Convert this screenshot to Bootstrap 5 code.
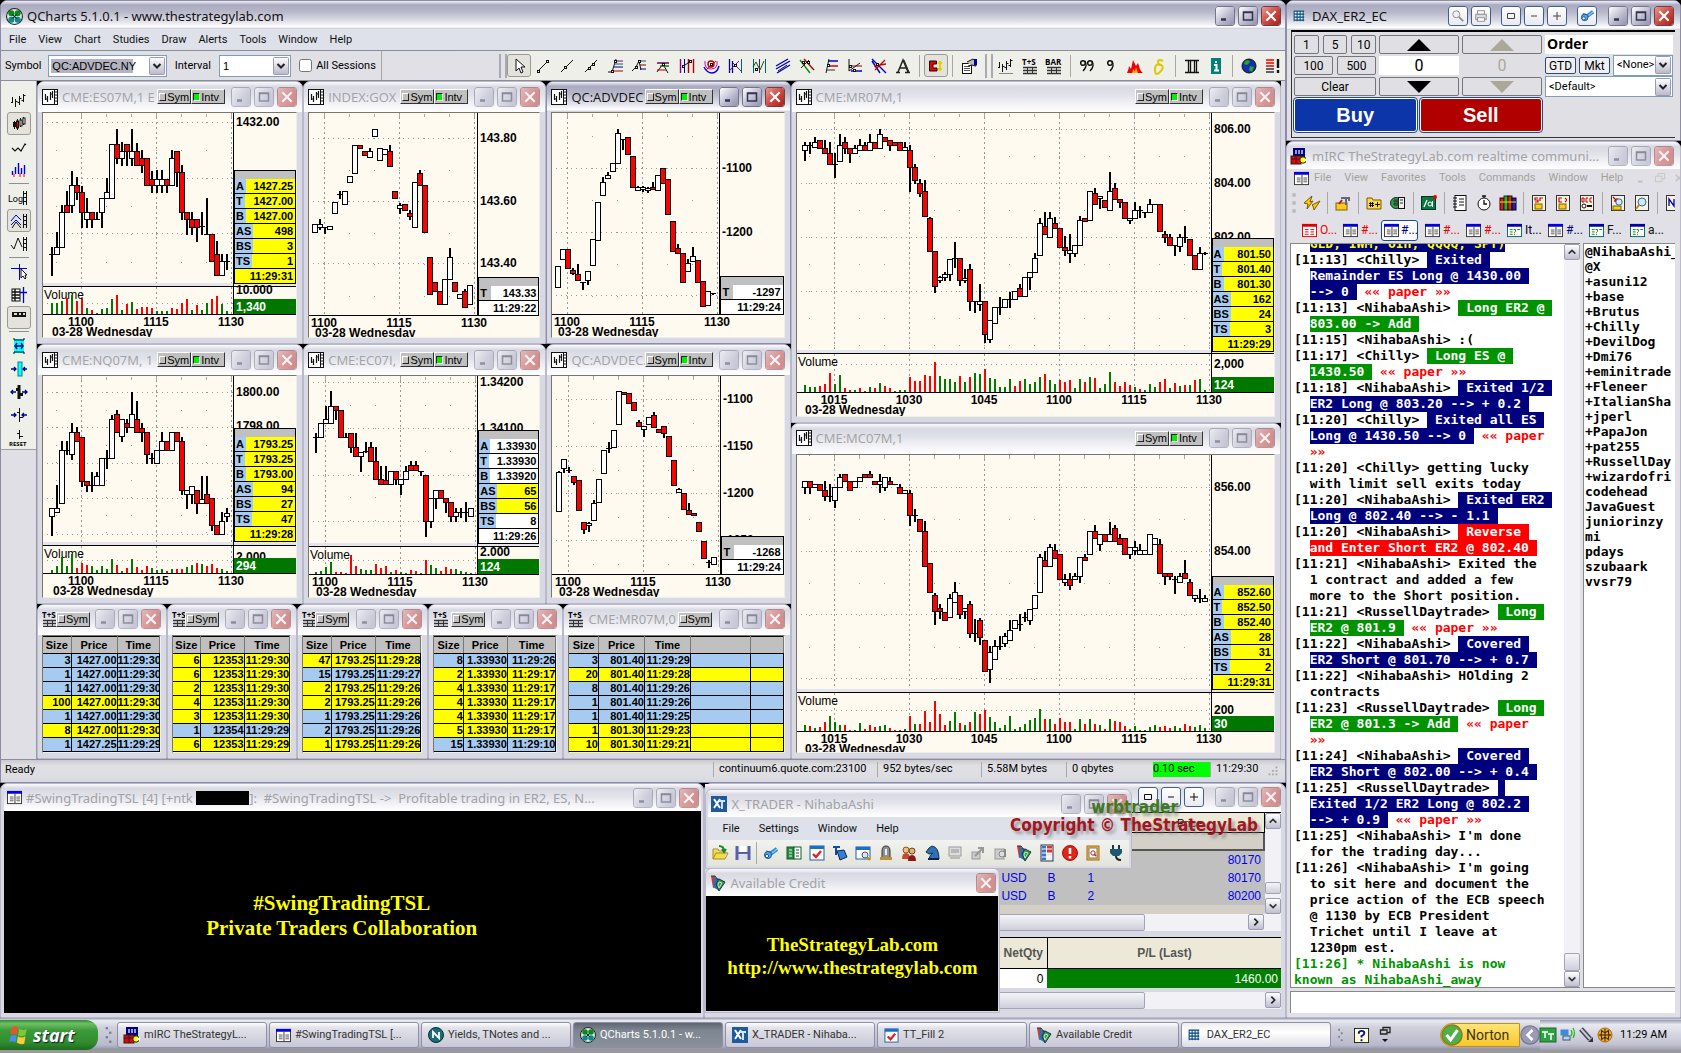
<!DOCTYPE html>
<html lang="en">
<head>
<meta charset="utf-8">
<meta name="viewport" content="width=device-width, initial-scale=1">
<title>Trading desktop</title>
<link href="https://cdn.jsdelivr.net/npm/bootstrap@5.3.0/dist/css/bootstrap.min.css" rel="stylesheet">
<style>
:root{--ui:Roboto,"Open Sans",sans-serif;--frame:#d9d9e4;--edge:#8c8ca8;--cream:#fffaf0}
html,body{height:100%}
body{margin:0;background:#000;font:11px/14px var(--ui);color:#000;overflow:hidden}
button,input,select{font:inherit;color:inherit}
.desk{height:100vh;min-height:900px;min-width:1200px;background:#9a9a9a;padding-bottom:3px}
.leftcol{flex:1 1 0;min-width:0;background:#000}
.rightcol{flex:0 0 395px;min-width:0;background:#000}
.xw{background:var(--frame);border:1px solid var(--edge);border-radius:7px 7px 0 0;overflow:hidden;min-width:0;min-height:0;position:relative}
.xw.dim{border-color:#b9b9cc}
.tb{display:flex;align-items:center;background:linear-gradient(#f0f0f6 0,#a9a9c0 14%,#b9b9cb 40%,#e4e4ec 75%,#fff 92%,#c8c8d6 100%);white-space:nowrap;overflow:hidden;flex:none}
.dim>.tb{background:linear-gradient(#fbfbfd 0,#d9d9e3 16%,#e2e2ea 45%,#f6f6f9 80%,#fff 100%)}
.tt{font-family:"Noto Sans","Open Sans",sans-serif;font-size:13px;line-height:18px;color:#111;overflow:hidden;flex:1 1 0;min-width:0}
.dim>.tb .tt{color:#a2a2a4}
.wb{width:20px;height:20px;flex:none;border:1px solid #fff;outline:1px solid #74748f;outline-offset:-1px;border-radius:3px;background:linear-gradient(135deg,#fff,#b6b6cb 60%,#9292ac);padding:0;display:flex;align-items:center;justify-content:center;margin-left:3px;color:#33334f}
.wb.cl{background:linear-gradient(135deg,#e79a92,#c9453d 55%,#a5231f);color:#fff;outline-color:#7a3b42}
.dim>.tb .wb{opacity:.5}
.wb.lite{background:linear-gradient(#fff,#e9e9ef);outline-color:#3d608c;color:#444}
.dim>.tb .wb.lite{opacity:1;color:#111}
.ic{display:block;flex:none}
.menu a{color:#111;text-decoration:none}
.menu.soft a{color:#a3a39c}
.menu{white-space:nowrap;font-size:11px}
/* QCharts */
.qtool{height:31px;background:linear-gradient(90deg,#dfdfe6 0,#e0e0e6 39%,#efefea 40%,#efefea);border-top:1px solid #8d8d98;border-bottom:1px solid #8d8d98}
.fld{border:1px solid #7f9db9;background-color:#fff;height:22px;font-family:"Liberation Sans",Arial,sans-serif;font-size:11px;border-radius:0;padding:0 20px 0 3px;appearance:none;
background-image:url("data:image/svg+xml,%3Csvg xmlns='http://www.w3.org/2000/svg' width='16' height='18'%3E%3Cdefs%3E%3ClinearGradient id='g' x2='0' y2='1'%3E%3Cstop stop-color='%23fff'/%3E%3Cstop offset='1' stop-color='%23b8b8cc'/%3E%3C/linearGradient%3E%3C/defs%3E%3Crect x='.5' y='.5' width='15' height='17' rx='1' fill='url(%23g)' stroke='%239a9ab0'/%3E%3Cpath d='M4.500 7l3.500 3.500 3.500-3.500' fill='none' stroke='%23222' stroke-width='2'/%3E%3C/svg%3E"),linear-gradient(#b3b3c1,#b3b3c1);background-repeat:no-repeat;background-size:16px 18px,0 0;background-position:right 1px center,2px 3px}
.fld.picked{background-size:16px 18px,82px 14px}
.sep{width:1px;height:22px;background:#a9a9a4;flex:none}
.grip{width:8px;height:24px;border-left:2px solid #a9a9b4;border-right:2px solid #a9a9b4;flex:none}
.tbtn{width:24px;height:23px;border:1px solid transparent;border-radius:3px;background:none;padding:0;display:flex;align-items:center;justify-content:center;flex:none}
.tbtn.on{background:#e3e3dc;border-color:#9b9b93}
.side{width:36px;flex:none;border-right:1px solid #9a9aa6;background:#dfdfe5}
.side .inner{background:#efefea;border-bottom:1px solid #a0a0a8;padding-top:8px}
.side hr{width:20px;margin:2px auto;border:0;border-top:1px solid #8f8f8f;opacity:1}
.mdi{display:grid;grid-template-columns:753fr 490fr;background:#000;min-width:0;min-height:0}
.mleft{display:grid;grid-template-rows:262fr 258fr 155fr;min-width:0;min-height:0}
.mright{display:grid;grid-template-rows:340fr 335fr;min-width:0;min-height:0}
.r3{display:grid;grid-template-columns:266fr 243fr 244fr;min-height:0}
.r5{display:grid;grid-template-columns:130fr 130fr 131fr 135fr 227fr;min-height:0}
.mw{display:flex;flex-direction:column;padding:0 5px 5px 4px}
.mw .tb{height:30px;margin:0 -5px 0 -4px;padding:0 5px 1px 4px}
.mw .tt{font-family:"Open Sans","Noto Sans",sans-serif;margin-left:4px}
.chip{height:15px;width:34px;flex:none;border:1px solid;border-color:#fff #333 #333 #fff;background:#c0c0c0;font:11px/12px "Liberation Sans",Arial,sans-serif;padding:0;display:flex;align-items:center;gap:1px;border-radius:0;overflow:hidden}
.chip i{width:7px;height:8px;border:1px solid;border-color:#fff #222 #222 #fff;margin-left:1px;flex:none}
.chip i.go{background:#00ee00;border-color:#222 #fff #fff #222}
.client{position:relative;flex:1 1 0;min-height:0;background:var(--cream);border:1px solid;border-color:#77776f #eee #eee #77776f;overflow:hidden}
.client svg.plot{position:absolute;inset:0;width:100%;height:100%;font:bold 12px "Liberation Sans",Arial,sans-serif}
.quote{position:absolute;right:0;background:#fff;border:1px solid #000;font:bold 11px/14px "Liberation Sans",Arial,sans-serif}
.quote .cap{height:8px;background:#c0c0c0}
.quote .q{display:flex;border-bottom:1px solid #000;height:15px;background:#fff}
.quote .q:last-child{border-bottom:0;height:14px}
.quote .q.y{background:#ff0}
.quote .k{background:#a6caf0;padding:0 2px 0 1px}
.quote .k.gr{background:#c0c0c0;padding-right:4px}
.quote .v{flex:1;text-align:right;padding-right:2px}
table.ts{border-collapse:collapse;table-layout:fixed;font:bold 11px/12px "Liberation Sans",Arial,sans-serif;width:100%}
.ts td,.ts th{border:1px solid #000;border-left:0;padding:0;height:14px;text-align:right;overflow:hidden;white-space:nowrap}
.ts th{background:#c0c0c0;text-align:center;height:17px;border-color:#000 #808080;border-right:1px solid #777}
.ts tr.b td{background:#a6caf0}.ts tr.y td{background:#ff0}
.status{height:20px;background:linear-gradient(#c9c9cf,#e0e0e4 30%,#dcdce2);border-top:1px solid #8e8e98}
.status span{border-left:1px solid #aaa;padding-left:5px;height:15px;flex:none}
.status .ok{background:#0f0;border:0}
/* black message windows */
.msg{background:#000;color:#ff0;font-family:"Liberation Serif","Times New Roman",serif;font-weight:bold;text-align:center;display:flex;flex-direction:column;justify-content:center}
/* X_TRADER */
.sb{background:#f1f1f6;display:flex;flex:none}
.sb button{width:16px;height:16px;border:1px solid #9c9cb2;border-radius:2px;background:linear-gradient(#fff,#bfbfd0);padding:0;display:flex;align-items:center;justify-content:center;flex:none}
.thumb{background:linear-gradient(#f4f4f8,#cfcfdc);border:1px solid #a4a4b8;border-radius:2px}
.float{position:absolute;z-index:2;display:flex;flex-direction:column}
.ari{font-family:"Liberation Sans",Arial,sans-serif}
.mark2{position:absolute;z-index:4;right:27px;top:14px;font:bold 17px/18px "DejaVu Sans Condensed","DejaVu Sans",sans-serif;text-align:right;color:#a31520;text-shadow:3px 3px 3px #777a}
.mark2 b{display:block;color:#3e7a1e;padding-right:80px}
/* DAX */
.nb{border:1px solid #75757c;border-radius:2px;background:#e0e0e4;padding:0;height:19px;font-size:12px;line-height:16px}
.daxg{display:grid;grid-template-columns:82px 80px 80px 1fr;grid-template-rows:19px 19px 19px 35px;gap:2px 3px;padding:3px 2px 0 2px}
.daxg .fld{height:21px;font-family:var(--ui);font-size:11px;line-height:14px;padding-right:16px;margin-top:-1px}
.big{color:#fff;font:bold 20px/30px "Liberation Sans",Arial,sans-serif;border:1px solid #fff;outline:1px solid #264a78;border-radius:3px;height:34px;padding:0}
/* mIRC */
.chat{font:bold 13px/16px "DejaVu Sans Mono","Liberation Mono",monospace;white-space:pre;background:#fff;overflow:hidden}
.chat span{display:inline-block;height:16px}
.cn{background:#00007f;color:#fff}.cg{background:#009300;color:#fff}.cr{background:#f00;color:#fff}.cy{background:#00007f;color:#ff0}.tr{color:#f00}.tg{color:#009300}
.nicks{font:bold 13px/15px "DejaVu Sans Mono","Liberation Mono",monospace;background:#fff;overflow:hidden}
.irctab{width:41px;flex:none;height:21px;border:1px solid transparent;background:none;padding:0 0 0 2px;display:flex;align-items:center;gap:3px;font-size:12px;border-radius:3px;white-space:nowrap;overflow:hidden}
.irctab.on{background:#fafafd;border-color:#1e4a86;width:37px;margin-right:4px;gap:2px}
/* taskbar */
.task{height:32px;flex:none;background:linear-gradient(#9a9ab0 0,#e9e9f0 8%,#d0d0dc 30%,#b9b9ca 85%,#8d8da4);padding-top:2px}
.start{width:98px;height:30px;flex:none;border:0;border-radius:0 12px 12px 0;background:linear-gradient(#2f8a2f,#6cc063 12%,#3c9a3a 35%,#318c2e 75%,#1d6a1e);color:#fff;font:italic bold 18px/26px "Open Sans",sans-serif;text-shadow:1px 1px 1px #123;display:flex;align-items:center;gap:5px;padding:0 0 0 8px}
.tk{flex:0 1 150px;height:26px;border:1px solid #8e8ea4;border-radius:3px;background:linear-gradient(#fff,#e2e2ea 20%,#c8c8d6);display:flex;align-items:center;gap:4px;padding:0 6px;white-space:nowrap;overflow:hidden;color:#333;margin-right:2px}
.tk.dn{background:linear-gradient(#5d6672,#7d8590 30%,#8a919b);color:#fff}
.tk.lt{background:linear-gradient(#eee,#fff 40%,#dcdce6);color:#333}
.norton{width:80px;height:24px;border:1px solid #b8912a;border-radius:12px 0 0 12px;background:linear-gradient(#ffe476,#f9c62a);font:14px/20px Roboto,sans-serif;color:#3d3418;padding:0;display:flex;align-items:center;gap:3px;flex:none}
.tray{background:linear-gradient(#9a9ab0,#e8e8f0 15%,#c4c4d2 80%,#a0a0b4);height:30px}
</style>
<script src="https://cdn.jsdelivr.net/npm/bootstrap@5.3.0/dist/js/bootstrap.bundle.min.js"></script>
</head>
<body>
<div class="desk d-flex flex-column">
<div class="d-flex flex-grow-1" style="min-height:0">

<div class="leftcol d-flex flex-column">
<!-- QCharts -->
<section class="xw d-flex flex-column" style="flex:783 1 0">
  <div class="tb" style="height:28px;padding:2px 4px 0 5px"><i data-ic="clover" data-s="17"></i><span class="tt ms-1">QCharts 5.1.0.1 - www.thestrategylab.com</span><i data-ctl="mxc"></i></div>
  <nav class="menu d-flex align-items-center ps-2" style="height:21px;gap:12px;background:#dee1ea"><a href="#">File</a><a href="#">View</a><a href="#">Chart</a><a href="#">Studies</a><a href="#">Draw</a><a href="#">Alerts</a><a href="#">Tools</a><a href="#">Window</a><a href="#">Help</a></nav>
  <div class="qtool d-flex align-items-center">
    <label for="sym" class="ms-1 me-1" style="width:40px">Symbol</label>
    <select id="sym" class="fld picked" style="width:120px"><option>QC:ADVDEC.NY</option></select>
    <label for="intv" class="mx-2">Interval</label>
    <select id="intv" class="fld" style="width:73px"><option>1</option></select>
    <input id="alls" type="checkbox" class="ms-2 me-1" style="width:13px;height:13px"><label for="alls" style="width:66px;white-space:nowrap">All Sessions</label>
    <span class="sep" style="height:29px"></span><span style="flex:0 1 119px"></span>
    <span class="grip"></span>
    <div class="d-flex align-items-center flex-grow-1" id="qicons"></div>
  </div>
  <div class="d-flex flex-grow-1" style="min-height:0;padding-right:4px">
    <div class="side"><div class="inner d-flex flex-column align-items-center" id="sideicons"></div></div>
    <div class="mdi flex-grow-1">
      <div class="mleft"><div class="r3" id="row1"></div><div class="r3" id="row2"></div><div class="r5" id="row3"></div></div>
      <div class="mright" id="right"></div>
    </div>
  </div>
  <div class="status d-flex align-items-center ps-1">Ready<div class="flex-grow-1"></div>
    <span style="width:164px">continuum6.quote.com:23100</span><span style="width:104px">952 bytes/sec</span><span style="width:85px">5.58M bytes</span><span style="width:87px">0 qbytes</span><span class="ok ps-0" style="width:57px">0.10 sec</span><span style="width:56px">11:29:30</span><i data-ic="sizer" data-s="14"></i><div style="width:5px"></div></div>
  <div style="height:3px"></div>
</section>

<div class="d-flex" style="flex:235 1 0;min-height:0">
  <section class="xw dim d-flex flex-column" style="flex:704 1 0;padding:0 2px 4px 3px">
    <div class="tb" style="height:27px;padding:0 2px 0 3px"><i data-ic="chan" data-s="15"></i><span class="tt ms-1">#SwingTradingTSL [4] [+ntk <b style="display:inline-block;width:53px;height:14px;background:#000;vertical-align:-2px"></b>]:&nbsp; #SwingTradingTSL -&gt;&nbsp; Profitable trading in ER2, ES, N...</span><i data-ctl="mxc"></i></div>
    <div class="msg flex-grow-1" style="font-size:21px;line-height:25px;padding:8px 22px 0 0"><span>#SwingTradingTSL</span><span>Private Traders Collaboration</span></div>
  </section>

  <section class="xw dim d-flex flex-column" style="flex:581 1 0;padding:0 4px 4px 0;overflow:visible">
    <div class="tb justify-content-end" style="height:28px;padding:0 0 2px 0"><button class="wb lite" aria-label="Restore"><i data-ic="mbox" data-s="12"></i></button><button class="wb lite" aria-label="Minus"><i data-ic="minus" data-s="12"></i></button><button class="wb lite me-2" aria-label="Plus"><i data-ic="plus" data-s="12"></i></button><i data-ctl="mxc"></i></div>
    <div class="d-flex ari" style="height:102px;border-top:1px solid #000;margin-left:130px">
      <div class="flex-grow-1 d-flex flex-column" style="background:#d4d0c8">
        <div style="height:20px;background:#ece9d8;border-bottom:1px solid #000;border-right:1px solid #000;text-align:right;padding:3px 62px 0 0">Price</div>
        <div style="height:18px;border-bottom:2px solid #555;border-right:2px solid #555"></div>
        <div class="d-flex flex-column" style="background:#c0c0c0;color:#00e;font-size:12px;line-height:18px">
          <div class="text-end pe-1">80170</div>
          <div class="d-flex pe-1" style="padding-left:166px"><span style="width:46px">USD</span><span style="width:40px">B</span><span>1</span><span class="ms-auto">80170</span></div>
          <div class="d-flex pe-1" style="padding-left:166px"><span style="width:46px">USD</span><span style="width:40px">B</span><span>2</span><span class="ms-auto">80200</span></div>
        </div>
      </div>
      <div class="sb flex-column"><button aria-label="Up"><i data-ic="up" data-s="10"></i></button><div class="flex-grow-1"></div><div class="thumb" style="height:12px"></div><button aria-label="Down" class="mt-1"><i data-ic="down" data-s="10"></i></button></div>
    </div>
    <div class="sb" style="margin-left:130px;height:17px;padding-right:17px"><div class="thumb" style="width:310px"></div><div class="flex-grow-1"></div><button aria-label="Right"><i data-ic="right" data-s="10"></i></button></div>
    <table class="ari" style="margin:6px 0 0 130px;width:auto;border-top:1px solid #000;font-size:12px;color:#555"><thead><tr style="height:31px;background:#ece9d8"><th style="width:212px;text-align:right;padding-right:4px;border:solid #000;border-width:0 1px 1px 0">NetQty</th><th style="text-align:center;border-bottom:1px solid #000">P/L (Last)</th></tr></thead>
    <tbody><tr style="height:19px"><td style="background:#fff;text-align:right;padding-right:4px;color:#000">0</td><td style="background:#008000;color:#fff;text-align:right;padding-right:3px">1460.00</td></tr></tbody></table>
    <div class="sb mt-1" style="margin-left:130px;height:17px"><div class="thumb" style="width:310px"></div><div class="flex-grow-1"></div><button aria-label="Right"><i data-ic="right" data-s="10"></i></button></div>

    <div class="xw dim float" style="left:0;top:5px;width:427px;height:80px;padding:0 2px 2px 2px">
      <div class="tb" style="height:27px;padding:1px 2px 0 3px"><i data-ic="xt" data-s="16"></i><span class="tt ms-1">X_TRADER - NihabaAshi</span><i data-ctl="mxc"></i></div>
      <nav class="menu d-flex align-items-center" style="height:23px;gap:19px;padding-left:14px;background:#dee1ea"><a href="#">File</a><a href="#">Settings</a><a href="#">Window</a><a href="#">Help</a></nav>
      <div class="d-flex align-items-center flex-grow-1" style="background:linear-gradient(#f2f2ee,#e4e4de)" id="xticons"></div>
    </div>
    <div class="xw dim float" style="left:0;top:84px;width:295px;bottom:4px;padding:0 1px 1px 0">
      <div class="tb" style="height:27px;padding:0 2px 0 4px"><i data-ic="cards" data-s="16"></i><span class="tt ms-1">Available Credit</span><i data-ctl="c"></i></div>
      <div class="msg flex-grow-1" style="font-size:19px;line-height:23px;padding-top:4px"><span>TheStrategyLab.com</span><span>http://www.thestrategylab.com</span></div>
    </div>
    <div class="mark2"><b>wrbtrader</b>Copyright © TheStrategyLab</div>
  </section>
</div>
</div>

<!-- right column -->
<div class="rightcol d-flex flex-column">
<section class="xw d-flex flex-column" style="height:141px;flex:none;padding:0 5px 2px 4px;background:#e0e0e4">
  <div class="tb" style="height:29px;margin:0 -5px 0 -4px;padding:0 6px 0 6px"><i data-ic="grid" data-s="12"></i><span class="tt" style="margin-left:7px">DAX_ER2_EC</span>
  <button class="wb lite" aria-label="Find"><i data-ic="lens" data-s="14"></i></button><button class="wb lite" aria-label="Print"><i data-ic="print" data-s="14"></i></button><button class="wb lite" style="margin-left:10px" aria-label="Normal"><i data-ic="mbox" data-s="12"></i></button><button class="wb lite" aria-label="Less"><i data-ic="minus" data-s="12"></i></button><button class="wb lite" aria-label="More"><i data-ic="plus" data-s="12"></i></button><button class="wb lite me-2" style="margin-left:10px" aria-label="Link"><i data-ic="torch" data-s="15"></i></button><i data-ctl="mxc"></i></div>
  <div class="daxg flex-grow-1" style="border-top:2px solid #000;border-left:1px solid #333;border-bottom:1px solid #333">
    <div class="d-flex gap-1"><button class="nb" style="flex:1">1</button><button class="nb" style="flex:1">5</button><button class="nb" style="flex:1">10</button></div>
    <button class="nb" aria-label="Up"><i data-ic="triu" data-s="24"></i></button><button class="nb" aria-label="Up 2" style="color:#aaa897"><i data-ic="triu" data-s="24"></i></button>
    <div class="bg-white" style="font:bold 14px/18px 'Open Sans',sans-serif;padding-left:2px">Order</div>
    <div class="d-flex gap-1"><button class="nb" style="flex:1">100</button><button class="nb" style="flex:1">500</button></div>
    <div class="bg-white text-center" style="font-size:16px;line-height:19px">0</div><div class="text-center" style="font-size:16px;line-height:19px;color:#aaa897">0</div>
    <div class="d-flex align-items-center" style="gap:3px;height:19px"><button class="nb" style="width:31px;height:17px;line-height:12px;border-color:#2d4a72;background:#f0f0f4">GTD</button><button class="nb" style="width:31px;height:17px;line-height:12px;border-color:#2d4a72;background:#f0f0f4">Mkt</button><select class="fld flex-grow-1" aria-label="Stop" style="min-width:0"><option>&lt;None&gt;</option></select></div>
    <button class="nb">Clear</button>
    <button class="nb" aria-label="Down"><i data-ic="trid" data-s="24"></i></button><button class="nb" aria-label="Down 2" style="color:#aaa897"><i data-ic="trid" data-s="24"></i></button>
    <select class="fld" aria-label="Account"><option>&lt;Default&gt;</option></select>
    <div class="d-flex" style="grid-column:1/4;gap:3px"><button class="big" style="flex:1;background:#0b35a8">Buy</button><button class="big" style="flex:1;background:#b00000">Sell</button></div>
  </div>
</section>
<section class="xw dim d-flex flex-column flex-grow-1" style="padding:0 5px 4px 3px;background:#e0e0e6">
  <div class="tb" style="height:27px;margin:0 -5px 0 -3px;padding:0 6px 0 4px"><i data-ic="mirc" data-s="16"></i><span class="tt" style="margin-left:5px">mIRC TheStrategyLab.com realtime communi...</span><i data-ctl="mxc"></i></div>
  <nav class="menu soft d-flex align-items-center" style="height:19px;padding-left:4px;gap:13px"><i data-ic="chan" data-s="15"></i><a href="#" style="margin-left:-8px">File</a><a href="#">View</a><a href="#">Favorites</a><a href="#">Tools</a><a href="#">Commands</a><a href="#">Window</a><a href="#">Help</a><span class="ms-auto d-flex" style="gap:8px;color:#c4c4c0"><i data-ic="min" data-s="11"></i><i data-ic="rest" data-s="11"></i><i data-ic="cls" data-s="10"></i></span></nav>
  <div class="d-flex align-items-center overflow-hidden" style="height:30px;flex:none" id="ircicons"></div>
  <div class="d-flex align-items-center overflow-hidden" style="height:25px;flex:none;padding-left:9px" id="irctabs"></div>
  <div class="d-flex flex-grow-1" style="min-height:0">
    <div class="flex-grow-1 d-flex" style="min-width:0;border:1px solid #888;border-right:0"><div class="chat flex-grow-1" id="chat" style="padding-left:3px"></div>
      <div class="sb flex-column"><button aria-label="Up"><i data-ic="up" data-s="10"></i></button><div class="flex-grow-1"></div><div class="thumb" style="height:18px;width:16px"></div><button aria-label="Down"><i data-ic="down" data-s="10"></i></button></div></div>
    <div class="nicks" id="nicks" style="flex:0 0 92px;border:1px solid #888;border-right:0;margin-left:3px;padding-left:1px"></div>
  </div>
  <input type="text" aria-label="Message" style="height:22px;border:1px solid #888;border-width:1px 0 0 1px;background:#fff;margin-top:3px">
</section>
</div>
</div>

<!-- taskbar -->
<footer class="task d-flex align-items-center">
  <button class="start"><i data-ic="flag" data-s="20"></i>start</button>
  <span style="width:19px;flex:none" class="d-flex justify-content-center"><i data-ic="dots" data-s="18"></i></span>
  <button class="tk"><i data-ic="mirc" data-s="16"></i>mIRC TheStrategyL...</button>
  <button class="tk"><i data-ic="chan" data-s="15"></i>#SwingTradingTSL [...</button>
  <button class="tk"><i data-ic="nn" data-s="16"></i>Yields, TNotes and ...</button>
  <button class="tk dn"><i data-ic="clover" data-s="16"></i>QCharts 5.1.0.1 - w...</button>
  <button class="tk"><i data-ic="xt" data-s="16"></i>X_TRADER - Nihaba...</button>
  <button class="tk"><i data-ic="check" data-s="15"></i>TT_Fill 2</button>
  <button class="tk"><i data-ic="cards" data-s="16"></i>Available Credit</button>
  <button class="tk lt"><i data-ic="grid" data-s="12"></i>&nbsp;DAX_ER2_EC</button>
  <span class="d-flex align-items-center" style="gap:7px;flex:1 0 90px"><i data-ic="dots" data-s="14"></i><i data-ic="help" data-s="15"></i><i data-ic="rest2" data-s="16"></i></span>
  <button class="norton"><i data-ic="ok" data-s="22"></i>Norton</button>
  <i data-ic="chev" data-s="20"></i>
  <span class="tray d-flex align-items-center" style="gap:3px;flex:none;padding:0 14px 0 0"><i data-ic="ttt" data-s="16"></i><i data-ic="net" data-s="16"></i><i data-ic="rocket" data-s="16"></i><i data-ic="globe2" data-s="16"></i><span class="ms-1">11:29 AM</span></span>
</footer>
</div>

<script>
const P=(d,c='#111',w=1)=>`<path d="${d}" fill="none" stroke="${c}" stroke-width="${w}"/>`;
const F=(d,c)=>`<path d="${d}" fill="${c}"/>`;
const R=(x,y,w,h,c,s)=>`<rect x="${x}" y="${y}" width="${w}" height="${h}" fill="${c}"${s?` stroke="${s}"`:''}/>`;
const C=(x,y,r,c,s)=>`<circle cx="${x}" cy="${y}" r="${r}" fill="${c}"${s?` stroke="${s}"`:''}/>`;
const N=(...p)=>{let s='';for(let i=0;i<p.length;i+=2)s+=R(p[i]-1+.5,p[i+1]-1+.5,2,2,'#fff','#111');return s};
const bars=P('M1.500 4v6M0 9.500h2M4.500 6v8M4.500 8.500h2M8.500 3v9M8.500 5.500h2M6.500 9.500h2M12.500 1v8M10.500 7.500h2M12.500 2.500h2');
const table=P('M1 9.500h14M1 12.500h14M1 15.500h14','#333',1.5)+P('M5.500 9v7M10.500 9v7','#333');
const win=R(.5,1.5,15,13,'#fff','#333')+R(0,1,16,3,'#0000e0');
const lines=P('M3 7.500h4M3 9.500h4M3 11.500h4M10 7.500h4M10 9.500h4M10 11.500h4','#555')+P('M8.500 4v10','#333');
const doc=R(1.5,.5,13,15,'#f7f3e2','#333');
const IC={
clover:C(8,8,7.5,'#dfe7df','#222')+[[5,5],[11,5],[5,11],[11,11]].map((p,i)=>C(p[0],p[1],2.8,i>1?'#0a8a8a':'#0a8a1e')).join('')+P('M6 6l4 4M10 6l-4 4','#033'),
min:P('M2 9.500h5','currentColor',2.5),max:P('M1.500 2h9v8h-9zM1 2.500h10','currentColor',1.5),cls:P('M2 2l8 8M10 2l-8 8','currentColor',1.8),
rest:P('M3.500 3V.5h7v6H8M.5 3.500h7v6h-7z','currentColor'),rest2:P('M7 2.500V.5h7v5h-3M4.500 3h6.500v4h-6.500z','#222',1.3)+F('M6 12h6l-3 3z','#111'),
mbox:P('M2.500 3.500h7v5h-7z','currentColor'),minus:P('M3 6h6','currentColor'),plus:P('M2 6h8M6 2v8','currentColor'),
up:P('M2 8l4-4 4 4','#333',2),down:P('M2 4l4 4 4-4','#333',2),right:P('M4 2l4 4-4 4','#222',2),
triu:F('M0 12L12 0l12 12z','currentColor'),trid:F('M0 0l12 12L24 0z','currentColor'),
chart:R(.5,.5,15,15,'#fff','#111')+P('M3.500 5v6M5.500 7v6M8.500 3v8M10.500 2v7M3.500 10h2M8.500 5h2','#111',1.2)+P('M12.500 1v14M13 3h2M13 6h2M13 9h2M13 12h2'),
tsi:`<text x="0" y="7" font-size="8" font-weight="bold" font-family="Open Sans">T+S</text>`+table,
bar:`<text x="-1" y="7" font-size="8" font-weight="bold" font-family="Open Sans">BAR</text>`+table,
chan:win+lines,chanr:R(.5,1.5,15,13,'#fff','#d00')+R(0,1,16,3,'#d00')+P('M3 7h4M9 7h4M3 9.500h4M9 9.500h4M3 12h4M9 12h4','#d00'),
chang:R(.5,1.5,15,13,'#fff','#066')+R(0,1,16,3,'#00a')+P('M3 7h3M3 9.500h3M3 12h3M11 7h3M7 7q3-1 2 2l-1 1v1M8 12v1','#080'),
sizer:[[11,4],[11,8],[7,8],[11,12],[7,12],[3,12]].map(p=>R(p[0],p[1],2,2,'#a5a5a5')).join(''),
grid:R(1,1,14,14,'#dff')+P('M1.500 1v14M5.500 1v14M9.500 1v14M13.500 1v14M1 1.500h14M1 5.500h14M1 9.500h14M1 13.500h14','#147',1.4),
lens:C(6,6,4,'#eef','#888')+P('M9 9l5 5','#888',2),print:R(4,2,8,4,'#fff','#888')+R(2,6,12,6,'#ddd','#888')+R(4,10,8,4,'#fff','#888'),
torch:P('M7 9l7-5','#2f86d8',4)+P('M9 8l5-4','#8cc8f4',1.5)+C(5,10,3.5,'#58a8e8','#1d5a9a')+C(4,11,1.7,'#e4f4ff','#1d5a9a')+P('M3 6l4 1','#1d5a9a'),
mirc:R(2,0,12,9,'#00007f')+P('M5 2v4M8 2v4M11 2v4','#fff',1.2)+R(0,8,10,8,'#e00','#222')+P('M5 8v8M0 11h10','#222')+C(12,12,3.2,'#ff0','#222')+F('M12 12l4-2v4z','#fff'),
xt:R(0,0,16,16,'#1d5a9a')+P('M3 3l6 9M9 3l-6 9','#fff',2)+P('M8 5h6M11 5v8','#cfe4ff',2),
cards:F('M1 1l4 0 2 10-4 2z','#d43a2a')+F('M4 2l6 2-2 11-5-3z','#2f6fb0')+F('M9 4l6 3-6 9-3-7z','#2f9a48')+P('M9 4l6 3-6 9-3-7zM1 1l4 0 3 4','#234')+P('M9 7l3 1-3 5-1-3z','#bde8c4'),
nn:C(8,8,7.5,'#1a6d74','#033')+P('M5 11V5l6 6V5','#fff',1.8),
check:R(1,1,14,14,'#fff','#1d5ea8')+R(1,1,14,3,'#1d6ec8')+P('M4 9l3 3 5-6','#d22',2.4),
dots:[1,5,9,13].map((y,i)=>R(i%2?9:6,y,2,2,'#777c90')).join(''),
help:R(.5,.5,15,15,'#ffffd8','#222')+P('M5 6q0-3 3-3t3 2.500q0 1.500-3 3V10M8 12v2','#0010a0',2),
ok:C(8,8,7.3,'#4fb04a','#8c7a1a')+P('M4 8l3 3.500 5-7','#fff',2.2),
chev:C(8,8,7.3,'#9a9ab4','#77778f')+P('M10 4L6 8l4 4','#fff',2),
ttt:R(0,1,16,14,'#2fa044','#186a28')+P('M2 5h6M5 5v6M8 7h6M11 7v6','#fff',1.5),
net:R(1,2,9,7,'#3a8ae0','#ddd')+R(4,9,7,4,'#b5d5f5','#456')+P('M12 3q2 3 0 6M14 1q3 5 0 10','#2b2',1.3),
rocket:P('M3 2l9 10','#445',5)+P('M3 2l9 10','#c5ccd8',2)+F('M10 15l5-5v5z','#333'),
globe2:C(8,8,7,'#f5a81c','#a60')+P('M8 2v12M2 8h12M4 4q4 3 8 0M4 12q4-3 8 0M5 3q-2 5 0 10M11 3q2 5 0 10','#222'),
flag:F('M3 2q3-2 5 0l-1 6q-2-2-5 0z','#e8552b')+F('M9 3q3 2 6 0l-1 5q-3 2-6 0z','#7cc83c')+F('M2 9q3-2 5 0l-1 5q-3-2-5 0z','#4a8df0')+F('M8 9q3 2 6 0l-1 6q-3 1-6-1z','#f7cd3a'),
/* drawing tools */
arrow:`<path d="M5 1v12l3-3 2 5 2-1-2-5h4z" fill="#fff" stroke="#111"/>`,
l1:P('M3 13L13 3')+N(3,13,12,3),l2:P('M2 14L14 2')+N(6,9),l3:P('M2 14L14 2')+N(6,10,10,6),
fib:P('M5 14L9 1M1 14h4')+P('M7 3h9','#800080')+P('M7 6h9','#066')+P('M7 9h9','#008')+P('M6 13h10','#a00')+N(5,13,8,3),
fib2:P('M1 13l4-4 3-6 2 9')+P('M9 3h6','#066')+P('M9 7h6','#800')+P('M9 11h6','#008')+N(5,9,8,3),
fib3:P('M2 14l6-8 5 9')+P('M2 5h12','#606',1.4)+P('M5 8h9','#080',1.4)+P('M2 12h9','#a00')+N(8,6),
vl:P('M1.500 1v14','#808',1.4)+P('M5.500 1v14','#00a')+P('M9.500 1v14','#a00',1.4)+P('M14.500 1v14','#a00',1.4)+P('M3 9l9-6')+N(4,8,11,3),
arc:`<circle cx="8" cy="6" r="3" fill="none" stroke="#a00" stroke-width="1.4"/><path d="M2 3q-1 8 6 8t6-8" fill="none" stroke="#d0c"/><path d="M1 9q3 6 8 6t7-7" fill="none" stroke="#00c" stroke-width="1.4"/>`+P('M3 12L13 3','#d00')+N(8,6),
cyc:P('M2.500 1v14M5.500 3v12','#00a',1.3)+P('M14.500 1v14','#066')+P('M2 13L12 3M6 5l8 8','#808')+N(8,7),
cyc2:P('M2.500 1v14','#066')+P('M8.500 1v14','#808')+P('M14.500 1v14','#066')+P('M2 9l3-5 4 8 4-9','#060')+N(5,11),
par:P('M1 8L13 1M1 11l14-8M2 15L15 7','#00c',1.4)+P('M3 13l9-6'),
dn:P('M5 1l10 11','#a00',1.4)+P('M1 2l10 13','#080',1.3)+P('M2 10L10 2')+N(4,4,9,4),
sp:P('M3 15L6 1')+P('M5 3h10','#00c',1.4)+P('M5 8h10','#d00',1.4)+P('M4 12h8','#333')+N(5,7),
sp2:P('M2 1v12l11-8')+P('M3 8h12','#800')+P('M4 13h11','#00c',1.4)+N(3,8,7,12),
gann:P('M1 1l14 14M1 3l8 12','#00c',1.4)+P('M14 2L4 12M15 6L3 8','#c00',1.3)+N(6,6),
txt:P('M1 14.500h4M10 14.500h5M3 14L8 2l5 12M5 10h6','#222',1.5)+P('M9 2l5 12','#222'),
mag:F('M1 3h8v3H5v4h4v3H1z','#e00')+P('M1.500 3h7v3H5v4h4v3H1.500z','#111')+P('M12 3v10M10 5h4M10 11h4','#ec0',2),
prop:R(1.5,5.5,9,10,'#fff','#111')+P('M3 8.500h6M3 10.500h6M3 12.500h6','#555')+F('M6 4l6-3 3 3v5l-3-1-4-2z','#bbb')+P('M6 4l6-3 3 2v5l-4-1-4 1','#111')+R(13,1,3,6,'#00a'),
bars:bars+P('M1 15.500h14','#888'),sbars:bars,
q2:[4,11].map(x=>`<circle cx="${x}" cy="5" r="2.300" fill="none" stroke="#111" stroke-width="1.500"/>`+P(`M${x+2} 3q3 5-2 10`,'#111',1.4)).join(''),
q1:`<circle cx="7" cy="5" r="2.300" fill="none" stroke="#111" stroke-width="1.500"/>`+P('M9 3q3 5-2 10','#111',1.4),
fire:F('M0 15q2-4 2-7l2 3 2-9 3 6 2-3 1 3q1 5 4 7z','#e00')+F('M5 15q1-2 1-4l2 2 1-4 2 6z','#fa0'),
delta:P('M12 3q-4-2-5 0t3 4-1 7-5-2 5-5','#e0c800',2),
cols:P('M1 2.500h14M1 14.500h14M4.500 2v12M6.500 2v12M10.500 2v12M12.500 2v12','#111',1.3),
info:R(3,0,10,16,'#008080')+P('M8 3v2M6 7h2.500v5M6 12.500h5','#fff',2),
globe:C(8,8,7,'#1430b0','#111')+F('M4 3q4-2 5 1l-3 3-3-1zM9 8l4 1-2 5-3-2z','#2a2'),
alert:P('M1 2h8M1 5h8M1 8h8','#e00',1.6)+P('M1 11h8M1 14h8','#333',1.6)+P('M13 1v9M13 12v3','#111',2.4),
candle:P('M3.500 5v8M6.500 3v11M9.500 2v9M12.500 1v8')+R(2,6,3,5,'#111')+R(5.5,5,2,7,'#e00','#111')+R(9,4,2,6,'#fff','#111')+R(12,2,2,6,'#fff','#111'),
lc:P('M1 9l3 3 3-3 3 3 4-7 1 1','#111',1.1),
hist:P('M1.500 13V9M4.500 12V5M7.500 12V1M10.500 12V6M13.500 12V3','#00d',1.4)+P('M3 15v-3M9 15v-4M13 15v-3','#e00'),
log:`<text x="-3" y="12" font-size="9" font-family="Roboto">Log</text>`+P('M12.500 1v14M15.500 1v14M12 3.500h4M12 7.500h4M12 11.500h4'),
env:P('M0 8l5-6 5 5M0 12l5-5 5 5','#00c')+P('M1 15l4-6 5 6')+P('M12.500 1v14M15.500 1v14M12 3.500h4M12 7.500h4M12 11.500h4'),
cv:P('M0 9l3 4L7 2l4 9')+P('M12.500 1v14M15.500 1v14M12 3.500h4M12 7.500h4M12 11.500h4'),
cross:P('M0 4.500h16M8.500 0v16','#00d')+`<path d="M10 5v9l2-2 2 3 1-1-1-3h2z" fill="#fff" stroke="#111"/>`,
tbl:R(1,2,8,12,'#fff','#111')+P('M1 5h8M1 8h8M1 11h8M4 2v12','#111',1.4)+P('M12.500 0v16M9 5.500h7','#00d',1.3),
small:R(1,2,14,5,'#111')+R(3,3,3,2,'#ddd')+R(8,3,2,2,'#ddd')+R(12,3,2,2,'#ddd'),
cy1:R(3,1,10,14,'#0ff')+P('M3 0v2h10V0M3 16v-2h10v2')+P('M4 8h8M6 5L4 8l2 3M10 5l2 3-2 3','#008',1.4),
cy2:R(7,1,4,14,'#0ff','#088')+P('M0 8h5M3 6l2 2-2 2M16 8h-4M14 6l-2 2 2 2','#008',1.3),
cy3:P('M8 1v14','#111',3)+P('M0 8h5M2 6L0 8l2 2M16 8h-5M14 6l2 2-2 2','#008',1.3)+R(5,4,4,3,'#111')+R(8,9,4,3,'#111'),
cy4:P('M8.500 1v14M6 5.500h2M9 10.500h3')+P('M0 8h5M3 6l2 2-2 2M16 8h-5M13 6l-2 2 2 2','#008',1.3),
reset:P('M8.500 0v9M6 3.500h2M9 6.500h3')+`<text x="-2" y="16" font-size="6" font-weight="bold" font-family="Open Sans">RESET</text>`,
/* X_TRADER */
open:F('M1 5h5l1 2h8l-3 7H1z','#f3dc4c')+P('M1 14V4h5l1 2h6v2M1 14l3-6h12l-3 6z','#a68a20')+P('M7 1q5 0 5 5M10 4l2 3 2-3','#1c8a2c',2),
save:P('M2 1v14M14 1v14','#5560a8',3)+P('M3 8h10','#5560a8',2)+R(5,1,6,6,'#fff')+R(4,10,8,5,'#dde'),
book:R(1,2,7,12,'#2a8a4a','#145a2a')+R(8,2,7,12,'#fff','#145a2a')+P('M3 5h3M3 8h3M3 11h3','#dfd')+P('M10 5h3M10 8h3M10 11h3','#145a2a'),
tee:P('M1 2h7M4 2v8','#144a9a',2)+F('M5 6l7-1 3 7-7 3z','#2f80d8')+P('M5 6l7-1 3 7-7 3z','#124'),
winl:R(1,2,14,12,'#fff','#1d5ea8')+R(1,2,14,3,'#1d6ec8')+C(10,10,3,'#cfe6ff','#555')+P('M12 12l3 3','#c80',2),
bell:F('M4 13V6q0-5 4-5t4 5v7z','#8b8f96')+P('M4 13V6q0-5 4-5t4 5v7z','#333')+R(2,12,12,3,'#c09030')+P('M8 4v6','#eee',2),
ppl:C(5,5,3,'#f2c07c','#853')+F('M1 14q0-6 4-6t4 6z','#c84a2a')+C(11,6,3,'#e8b070','#642')+F('M7 16q0-6 4-6t4 6z','#8a1a1a'),
knight:F('M5 14q1-5 4-6l-4 1-3-2 3-4 3-2q7 1 7 13z','#2f70b8')+P('M5 14q1-5 4-6l-4 1-3-2 3-4 3-2q7 1 7 13z','#134')+R(4,13,11,2,'#124'),
gdoc:R(2,2,12,9,'#ddd','#999')+P('M4 5h8M4 7h8M3 13h10','#aaa',1.5),
gup:R(2,7,8,7,'#ccc','#999')+P('M5 11l7-7M8 3h5v5','#999',2),
gex:R(2,4,9,10,'#ccc','#999')+C(9,9,3,'#ddd','#888')+P('M12 4v8','#888',2),
ladder:R(2,0,12,16,'#eee','#335')+R(3,1,4,14,'#3a76c8')+R(8,1,5,7,'#d33')+P('M3 4h10M3 8h10M3 12h10','#fff'),
ex:C(8,8,7.5,'#e02416','#a01010')+P('M8 3v6M8 11v2.500','#fff',2.6),
qd:R(2,1,12,14,'#f6b93c','#a86a10')+R(4,3,8,10,'#fff','#777')+C(8,8,2.2,'#fff','#a22')+P('M9 9l2 2','#a22',1.5),
plug:P('M5 0v4M11 0v4','#234',2)+F('M2 4h12v4l-3 3H5L2 8z','#1c5a74')+P('M8 11q0 4 5 4','#222',2),
/* mIRC */
bolt:F('M0 8l8-7-2 6 3-1-6 8 1-5z','#ffc800')+P('M0 8l8-7-2 6 3-1-6 8 1-5z','#7a5a00')+F('M8 10l8-4-6 9-1-4z','#ffc800')+P('M8 10l8-4-6 9-1-4z','#7a5a00'),
tools:R(1,8,11,7,'#ffc81e','#760')+P('M6 3h8v3M11 3v7','#667',2)+P('M7 5l-3 4','#a22',2),
fold:F('M1 3h5l1 2h8v9H1z','#ffd83c')+P('M1 3h5l1 2h8v9H1z','#775a00')+P('M3 8.500h5M3 10.500h5M4.500 7v5M6.500 7v5M9 9.500h5M11.500 7v5','#111'),
list:C(6,8,5.5,'#2fa040','#033')+R(8.5,2.5,6,11,'#eee','#111')+P('M10 5h3M10 8h3M3 6h6M3 9h6M5 4v7M7 4v7','#333'),
sla:R(.5,1.5,14,13,'#0a7a3a','#033')+P('M3 12l3-7','#fff',1.3)+`<circle cx="9" cy="9" r="2" fill="none" stroke="#fff"/>`+P('M11.500 6v6','#fff')+C(14,2,2,'#e00'),
notes:R(3,.5,11,15,'#fff','#111')+P('M1 3h4M1 6h4M1 9h4M1 12h4M7 4h5M7 7h5M7 10h5'),
clock:C(8,9,6,'#fff','#111')+P('M8 5v4h3M6 1h4M8 1v2','#111',1.3),
books:R(0,3,4,12,'#c22','#300')+R(4,1,4,14,'#3a3','#030')+R(8,1,4,14,'#c30','#300')+R(12,3,4,12,'#22a','#003')+P('M0 7h16','#fd0'),
s1:doc+P('M7 3H4v2h3v2H4M9 6V3l3 0','#c00',1.2)+R(4,9,7,5,'#ffc81e','#760'),
s2:doc+P('M7 3H4v4h3M10 3q3 2 0 4','#c00',1.2)+R(4,9,7,5,'#ffc81e','#760'),
dcc:doc+P('M3 3v4h2V3zM9 3H7v4h2M13 3h-2v4h2','#c00')+C(5,11,2,'#fff','#111')+P('M8 11h5','#111',2),
m1:doc+P('M3 2l4 4M7 3v3H4','#c00',1.3)+C(9,7,3.2,'#cdeaff','#369')+R(3,11,8,4,'#ffc81e','#760'),
m2:doc+C(8,7,4,'#cdeaff','#369')+P('M5 10l-3 4','#c80',2),nd:doc+P('M4 11V4l5 7V4','#00a',1.3)
};
const svg=(n,s)=>/^tri/.test(n)?`<svg class="ic mx-auto" width="24" height="12" viewBox="0 0 24 12" aria-hidden="true">${IC[n]}</svg>`:`<svg class="ic" width="${s}" height="${s}" viewBox="0 0 ${/^(min|max|cls|rest|mbox|minus|plus|up|down|right)$/.test(n)?'12 12':'16 16'}" overflow="visible" aria-hidden="true">${IC[n]||''}</svg>`;
const ctl=t=>[...t].map(c=>({m:`<button class="wb" aria-label="Minimize">${svg('min',12)}</button>`,x:`<button class="wb" aria-label="Maximize">${svg('max',12)}</button>`,c:`<button class="wb cl" aria-label="Close">${svg('cls',14)}</button>`})[c]).join('');
const $=i=>document.getElementById(i);
const strip=(list,w)=>list.split(' ').map(n=>n==='|'?'<span class="sep"></span>':n==='||'?'<span class="grip"></span>':`<button class="tbtn${n.endsWith('*')?' on':''}" style="width:${w}px" aria-label="${n}">${svg(n.replace('*',''),16)}</button>`).join('');
$('qicons').innerHTML=strip('arrow* l1 l2 l3 fib fib2 fib3 vl arc cyc cyc2 par dn sp sp2 gann txt | mag* | prop || bars tsi bar | q2 q1 fire delta | cols info | globe alert',24);
$('qicons').querySelectorAll('.sep').forEach(e=>e.style.margin='0 4px');
$('qicons').querySelector('.grip').style.margin='0 1px 0 4px';
$('sideicons').innerHTML='sbars candle* lc hist | log env* cv | cross tbl small* | cy1 cy2 cy3 cy4 reset'.split(' ').map(n=>n==='|'?'<hr>':`<button class="tbtn${n.endsWith('*')?' on':''}" aria-label="${n}">${svg(n.replace('*',''),16)}</button>`).join('');
$('xticons').innerHTML=strip('open save | torch book check tee winl bell ppl knight gdoc gup gex cards ladder ex qd plug',23);
$('xticons').querySelector('.sep').style.margin='0 2px';
$('ircicons').innerHTML='<span style="width:4px;margin:0 4px 0 2px;height:20px;border-left:4px dotted #bbb"></span>'+strip('bolt | tools | fold list | sla | notes clock books | s1 s2 dcc | m1 m2 | nd',24);
$('ircicons').querySelectorAll('.sep').forEach(e=>e.style.margin='0 3px');
$('irctabs').innerHTML=[['chanr','O...','#e00'],['chan','#...','#e00'],['chan','#...','#00007f',1],['chan','#...','#e00'],['chan','#...','#e00'],['chang','It...','#003'],['chan','#...','#00007f'],['chang','F...','#111'],['chang','a...','#111']].map(t=>`<button class="irctab${t[3]?' on':''}" style="color:${t[2]}">${svg(t[0],15)}${t[1]}</button>`).join('');

/* Chart data. Bars: high,top,bottom,low with r for a falling bar; y is in thirds of a pixel. */
const B={
es:'743,766,766,829 700,745,766 618,640,745 577,619,640r 516,559,619,640 534,559,580,600r 561,580,640,683r 598,640,660,683 640,640,660,683r 640,660,660 598,598,640,683 537,580,598 434,434,598 390,434,476,492r 430,455,476,497 434,434,455,497r 390,455,476,497 432,455,497r 452,476,497,518r 476,476,559r 516,539,559,580r 514,539,559,580 514,539,559,580 539,539,559,580r 452,476,559 455,455,518,560r 497,518,640,660r 640,640,660,704r 640,660,683,704r 660,660,683,726r 640,680,683,704 598,704,704 704,704,787r 726,766,829r 764,787,829 764,787,787,810',
gox:'674,674,700 660,674,683,690 683,683,688,702r 682,682,691 608,608,643 577,585,587,598 577,577,616 532,532,550 439,439,523 439,439,448r 457,457,467r 447,457,475 391,391,410 448,448,484 450,450,466 438,457,502r 577,577,598r 613,618,626,643 616,616,634r 634,643,652,660r 550,550,683 513,523,559r 559,559,700r 775,775,886r 850,850,877r 877,877,916r 841,841,916 747,775,841 850,850,877r 886,886,898 870,877,925r 859,859,916',
ad1:'802,802,865 751,751,781 751,751,808r 808,814,822,826r 796,826,844r 850,850,853,870 817,817,844,856 721,721,799 610,610,724 535,550,589 520,529,538 493,493,517 390,403,493 420,420,422,450 415,415,466r 472,472,565r 562,565,574 560,563,569,577 565,568,572,580 550,563,569r 529,529,574 508,508,553r 541,541,646r 667,667,757r 735,748,763r 763,763,850r 780,793,817 744,772,787 784,784,850r 847,847,922r 876,876,919 883,883,884,884',
mr:'430,439,454,483 430,439,442,463 415,430,445 424,424,448r 424,448,463r 430,463,496r 463,496,496,535 405,439,487 415,430,448,463r 448,448,463,489r 439,448,463 421,439,454 430,439,454r 405,430,454 430,430,448r 390,406,448 415,415,426r 424,424,439,454r 430,430,439r 430,430,454r 430,445,454 439,454,505,577r 496,505,544,553r 541,553,583,592r 543,577,650r 653,658,755r 755,755,860,878r 832,835,844,850 820,826,835,843 780,780,826,843 730,778,780,805 778,778,844,859r 810,838,844,850 795,811,907,933r 907,907,910,940 856,907,916,933 907,907,1006,1030r 964,964,1021,1030 925,925,973 895,925,925,945 901,901,925 880,901,901,925 877,877,901 856,868,892r 835,835,892 820,820,835,870 763,778,820 658,673,768 640,682,706r 640,658,715 655,673,688r 688,688,745r 712,745,754,768r 706,754,763,788 738,738,763,770 650,664,739 658,658,667r 577,577,664 568,583,616r 592,592,598,628 604,604,625r 520,577,634 553,568,601r 601,601,610,625r 610,610,658r 658,658,664,673 610,634,658 622,634,637,655 640,640,640,655 601,616,640 616,616,616 616,616,697r 697,706,715,730r 706,715,739r 739,739,742,768 706,715,742,755 682,715,718,730 720,721,769r 769,769,811r 745,763,811 760,763,763,766',
nq:'503,503,529,584 434,503,516 304,331,489 304,331,331,342 250,277,342,357 262,277,304r 290,290,424,437r 424,424,436,452r 396,434,436,452 396,409,436 355,355,436 331,355,355,383 226,238,355 210,223,277r 238,238,289,304 238,250,262,277r 156,223,262 182,238,277r 250,264,277,304r 277,277,342,370r 340,355,355,370 331,331,370 277,304,331 304,304,331r 277,277,331 277,277,304r 290,304,450,462r 450,450,462,504 437,437,462,489 450,450,489,518r 409,477,489 409,463,489r 475,475,556,570r 556,556,583r 516,544,583 503,518,529,543',
ec:'280,290,292,336 250,250,292 198,237,250 153,197,250 197,197,210,237r 210,210,292r 280,290,292 280,280,322,336r 280,322,348r 336,336,348,392 306,334,336 306,322,363r 320,363,418r 378,418,432r 378,420,432r 392,392,432 392,392,418,432r 418,418,432,462 378,392,418 364,376,390r 364,376,390r 392,392,392,405 405,405,544,588r 475,475,544,560 450,450,475,503 450,450,475r 475,475,487,517r 487,487,528,544r 503,517,528,544 503,517,517,530 486,517,517,544 503,503,528',
ad2:'394,397,514 358,358,385,397 382,390,392,397 409,409,427,432r 421,421,511r 547,547,568,580r 545,550,556,572 480,490,541 418,418,485 331,331,400 306,325,328,335 271,271,322 154,154,253 157,157,163r 160,160,190r 187,187,211r 240,247,259r 259,259,268,287 232,232,253 216,226,262r 268,268,275r 259,259,280,292r 289,289,349r 361,361,436r 443,448,457 460,460,508r 490,511,523r 520,520,526r 547,547,574r 604,604,653r 660,665,667,680 652,652,673',
mc:'421,421,439,457 421,421,439,457r 430,430,439 430,430,448r 421,448,466,478r 430,466,466,480 439,439,478,497 400,409,439 400,400,421r 421,421,448r 421,421,439 409,409,421 400,400,409r 390,400,409r 421,421,430r 400,421,430,454 409,409,439,448 409,421,430r 430,430,430 430,439,457r 448,448,457 448,457,523,553r 505,523,523,540 535,535,571r 541,571,676r 667,667,754r 757,763,811,850r 790,802,811,830r 812,812,838r 760,772,829 722,754,783 763,763,820,830r 802,802,810,830 780,790,877,887r 835,877,877,900 830,838,887,908r 898,898,991r 916,934,983,1022 898,916,955 885,916,916,925 875,886,907,916 838,868,898 838,838,860 820,848,848,868 812,829,829,840 803,803,838,850 763,763,802 640,649,754 631,658,676r 610,619,676 610,628,652r 640,640,715r 700,715,724,733 697,715,733,745r 697,706,715 649,649,706,724 640,649,658r 571,571,640 553,571,592r 580,580,610,628 580,580,600r 544,580,600 553,562,600r 580,592,610r 592,592,640r 619,619,640,650 601,619,628,640 610,628,640 628,628,640 580,580,640 592,592,610 595,610,697r 697,697,706,730r 697,697,706,715r 706,715,715,755 697,706,724 658,697,712r 715,724,763r 763,763,770,780 745,770,772,783 763,772,781'};
/* Volume: bar heights in thirds of a pixel, minus for a falling bar. */
const V={
es:'33,33,39,-48,57,-40,-45,18,-12,2,15,18,45,-57,12,-30,37,-15,-21,-21,-18,10,10,10,-18,-15,-33,-45,12,-27,12,33,-45,-54,30,8',
nq:'9,20,49,20,56,-16,-31,-24,20,9,20,13,42,-23,6,-15,42,-18,-9,-20,16,9,11,-5,13,-11,-11,18,23,-29,27,-21,-27,-16,13,6',
ec:'5,8,20,35,-6,-6,-4,-57,-23,16,12,12,-30,-18,-24,5,-12,6,4,-12,-10,4,-42,26,18,-10,-20,-14,14,8,6,4',
mr:'20,14,15,-17,-23,-56,23,50,-11,-5,5,-11,-2,14,-11,26,-17,-11,2,6,6,-44,-32,-32,-50,-47,-90,47,39,39,29,-47,29,-45,56,54,-68,41,39,14,14,38,-19,-32,38,23,29,44,-54,35,23,-35,-29,-35,11,38,-29,44,-41,11,23,60,-29,-17,-29,-21,14,-9,5,23,15,-29,-39,11,-26,17,-20,21,-35,38,6',
mc:'19,-15,10,-13,-28,46,28,19,-19,-4,4,25,-7,-19,-12,15,19,-10,-1,-4,7,-46,21,-21,-61,-28,-91,-52,-19,31,58,-25,19,-28,58,-52,-64,42,28,10,19,46,7,13,21,34,40,67,-37,37,-21,-40,-28,-28,7,37,-21,37,-21,19,-7,37,-31,-28,-16,7,16,4,4,13,19,-13,-16,-10,16,10,-21,-16,13,19,10'};

function plot(c){
  let s='',G='stroke="#999" stroke-width="1"',end=c.base,y,x;
  const vt=c.vtop||c.base,pb=c.pb||c.base;
  for(x=c.x0;x<=c.ax;x+=75)s+=`<path d="M${x+.5} ${c.top}V${pb}M${x+.5} ${vt}V${end}" ${G} stroke-dasharray="2 3"/>`;
  for(y of c.grid)s+=`<path d="M${c.left} ${y+.5}H${c.ax}" ${G} stroke-dasharray="1 4"/>`;
  const st=(c.grid[1]-c.grid[0])/2;
  for(y=c.grid[0]-st;y<pb;y+=st)for(x=c.x0-25;x<c.ax;x+=25)if(y>c.top&&x>c.left)s+=R(x,Math.round(y),1,1,'#999');
  for(x=c.x0;x<=c.ax;x+=25)s+=R(x,c.top+2,1,3,'#aaa');
  if(c.vtop){
    s+=R(c.left,pb,1000,vt-pb,'#e4e4ea')+R(c.left,vt-1,1000,1,'#000')+`<path d="M${c.left} ${c.vg+.5}H${c.ax}" ${G} stroke-dasharray="1 4"/>`;
    s+=`<text x="${c.left+2}" y="${vt+12}" font-weight="normal">Volume</text>`;
    V[c.id].split(',').forEach((v,i)=>{const h=Math.max(1,Math.round(Math.abs(v)/3));s+=R(c.x0+(c.i0+i)*5,end-h,2,h,v<0?'#f00':'#007a00')});
  }
  B[c.id].split(' ').forEach((b,i)=>{
    const r=b.endsWith('r'),a=b.replace('r','').split(',').map(v=>Math.round(v/3)+c.oy),cx=c.x0+(c.i0+i)*5;
    const lo=Math.max(a[3]??a[2],a[2]);
    s+=R(cx,a[0],2,lo-a[0]+1,'#000');
    s+=a[2]-a[1]<2?R(cx-2,a[1],6,1,'#000'):`<rect x="${cx-1.5}" y="${a[1]+.5}" width="5" height="${a[2]-a[1]}" fill="${r?'#f00':'#fff'}" stroke="#000"/>`;
  });
  s+=R(c.left,end,1000,1,'#000')+R(c.ax,c.top,1,end-c.top,'#000');
  c.lab.forEach(l=>s+=`<text x="${c.ax+3}" y="${l[1]+4}">${l[0]}</text>`);
  if(c.vtop)s+=R(c.ax+1,end-15,200,15,'#007800')+`<text x="${c.ax+3}" y="${end-3}" fill="#fff">${c.vv}</text>`;
  let t=c.id[0]==='m'?1015:1100;
  for(x=c.x0;x<=c.ax;x+=75){s+=`<text x="${x}" y="${end+12}" text-anchor="middle">${t}</text>`;t+=15;if(t%100===60)t+=40}
  s+=`<text x="${c.dx}" y="${end+22}">03-28 Wednesday</text>`;
  return `<svg class="plot"><g transform="translate(${-c.left-1} ${-c.top-1})">${s}</g></svg>`;
}
function quote(c){
  const q=c.q.map(r=>r.length===1?`<div class="q${c.hl?' y':''}"><span class="v">${r[0]}</span></div>`:`<div class="q${(c.hl||r[2])?' y':''}"><span class="k${c.q.length===2?' gr':''}">${r[0]}</span><span class="v">${r[1]}</span></div>`).join('');
  return `<div class="quote" style="left:${c.ax-c.left}px;top:${c.qt-c.top-1}px"><div class="cap"></div>${q}</div>`;
}
function win2(c){
  const chips=`<button class="chip"><i></i>Sym</button><button class="chip"><i class="go"></i>Intv</button>`;
  return `<div class="xw ${c.act?'':'dim'} mw"><div class="tb">${svg('chart',16)}<span class="tt">${c.t}</span>${chips}<span style="width:3px"></span>${ctl('mxc')}</div><div class="client">${plot(c)}${quote(c)}</div></div>`;
}
const six=(a,t,b,as,bs,ts,tm)=>[['A',a],['T',t],['B',b],['AS',as],['BS',bs],['TS',ts],[tm]];
const W={
 es:{id:'es',t:'CME:ES07M,1 E',left:42,top:113,x0:81,i0:-6,oy:0,ax:233,pb:284,vtop:288,vg:304,base:315,grid:[123,179,234],lab:[['1432.00',123],['10.000',291]],vv:'1,340',dx:52,qt:171,hl:1,q:six('1427.25','1427.00','1427.00','498','3','1','11:29:31')},
 gox:{id:'gox',t:'INDEX:GOX',left:308,top:113,x0:324,i0:-2,oy:0,ax:477,base:316,grid:[139,202,264],lab:[['143.80',139],['143.60',202],['143.40',264]],dx:315,qt:278,q:[['T','143.33'],['11:29:22']]},
 ad1:{id:'ad1',act:1,t:'QC:ADVDEC',left:551,top:113,x0:567,i0:-2,oy:0,ax:719,base:315,grid:[169,233,296],lab:[['-1100',169],['-1200',233]],dx:558,qt:277,q:[['T','-1297'],['11:29:24']]},
 nq:{id:'nq',t:'CME:NQ07M, 1 E',left:42,top:375,x0:81,i0:-6,oy:340,ax:233,pb:542,vtop:546,vg:560,base:573,grid:[392,427,463,498,534],lab:[['1800.00',392],['1798.00',426],['2,000',557]],vv:'294',dx:53,qt:428,hl:1,q:six('1793.25','1793.25','1793.00','94','27','47','11:29:28')},
 ec:{id:'ec',t:'CME:EC07I,',left:308,top:375,x0:325,i0:-2,oy:340,ax:477,pb:543,vtop:547,vg:560,base:574,grid:[382,428,475,521],lab:[['1.34200',382],['1.34100',428],['2.000',552]],vv:'124',dx:316,qt:430,q:[['A','1.33930'],['T','1.33930'],['B','1.33920'],['AS','65',1],['BS','56',1],['TS','8'],['11:29:26']]},
 ad2:{id:'ad2',t:'QC:ADVDEC.',left:551,top:375,x0:568,i0:-2,oy:340,ax:720,base:574,grid:[399,446,493,540],lab:[['-1100',399],['-1150',446],['-1200',493],['-1250',540]],dx:559,qt:536,q:[['T','-1268'],['11:29:24']]},
 mr:{id:'mr',t:'CME:MR07M,1',left:795,top:113,x0:833,i0:-6,oy:0,ax:1210,pb:351,vtop:355,vg:365,base:393,grid:[130,184,238,292],lab:[['806.00',130],['804.00',184],['802.00',238],['2,000',365]],vv:'124',dx:804,qt:239,hl:1,q:six('801.50','801.40','801.30','162','24','3','11:29:29')},
 mc:{id:'mc',t:'CME:MC07M,1',left:795,top:453,x0:833,i0:-6,oy:340,ax:1210,pb:688,vtop:692,vg:709,base:730,grid:[486,550,613,677],lab:[['856.00',486],['854.00',550],['200',709]],vv:'30',dx:804,qt:575,hl:1,q:six('852.60','852.50','852.40','28','31','2','11:29:31')}};
$('row1').innerHTML=win2(W.es)+win2(W.gox)+win2(W.ad1);
$('row2').innerHTML=win2(W.nq)+win2(W.ec)+win2(W.ad2);
$('right').innerHTML=win2(W.mr)+win2(W.mc);

/* Time and sales */
const T=[
 ['',[28,46,0],'b3 1427.00 11:29:30|b1 1427.00 11:29:30|b1 1427.00 11:29:30|y100 1427.00 11:29:30|b1 1427.00 11:29:30|y8 1427.00 11:29:30|b1 1427.25 11:29:29|b'],
 ['',[27,44,0],'y6 12353 11:29:30|y6 12353 11:29:30|y2 12353 11:29:30|y4 12353 11:29:30|y3 12353 11:29:30|b1 12354 11:29:29|y6 12353 11:29:29|b'],
 ['',[28,44,0],'y47 1793.25 11:29:28|b15 1793.25 11:29:27|y2 1793.25 11:29:26|y2 1793.25 11:29:26|b1 1793.25 11:29:26|b2 1793.25 11:29:26|y1 1793.25 11:29:26|y'],
 ['',[29,44,0],'b8 1.33930 11:29:26|y2 1.33930 11:29:17|y4 1.33930 11:29:17|y4 1.33930 11:29:17|y4 1.33930 11:29:17|y5 1.33930 11:29:17|b15 1.33930 11:29:10|b'],
 ['CME:MR07M,0',[29,46,46,60,0],'b3 801.40 11:29:29|y20 801.40 11:29:28|b8 801.40 11:29:26|b1 801.40 11:29:26|b1 801.40 11:29:25|y1 801.30 11:29:23|y10 801.30 11:29:21|y']];
$('row3').innerHTML=T.map((t,k)=>{
  const cols=t[1].map(w=>w?`<col style="width:${w}px">`:'<col>').join(''),h=['Size','Price','Time','',''];
  const rows=t[2].split('|').map(r=>{const a=r.slice(1).split(' ');return `<tr class="${r[0]}">${t[1].map((_,i)=>`<td>${a[i]||''}</td>`).join('')}</tr>`}).join('');
  return `<div class="xw dim mw"><div class="tb">${k===4?svg('tsi',16):`<span style="width:${[14,13,13,18][k]}px;overflow:hidden;flex:none">${svg('tsi',16)}</span>`}<span class="tt" ${k<4?'style="margin:0;flex:0 0 0px"':''}>${t[0]}</span><button class="chip"><i></i>Sym</button><span style="flex:1 1 0;max-width:4px"></span>${ctl('mxc')}</div><div class="client"><table class="ts"><colgroup>${cols}</colgroup><thead><tr>${t[1].map((_,i)=>`<th>${h[i]}</th>`).join('')}</tr></thead><tbody>${rows}</tbody></table></div></div>`}).join('');

/* Chat log: {n|..} navy, {g|..} green, {r|..} red, {p|..} red text, {t|..} green text */
const L=`  {y|GLD, IWM, OIH, QQQQ, SPY)}
[11:13] <Chilly> {n| Exited }
  {n|Remainder ES Long @ 1430.00 }
  {n|--> 0 } {p|«« paper »»}
[11:13] <NihabaAshi> {g| Long ER2 @ }
  {g|803.00 -> Add }
[11:15] <NihabaAshi> :(
[11:17] <Chilly> {g| Long ES @ }
  {g|1430.50 } {p|«« paper »»}
[11:18] <NihabaAshi> {n| Exited 1/2 }
  {n|ER2 Long @ 803.20 --> + 0.2 }
[11:20] <Chilly> {n| Exited all ES }
  {n|Long @ 1430.50 --> 0 } {p|«« paper}
  {p|»»}
[11:20] <Chilly> getting lucky
  with limit sell exits today
[11:20] <NihabaAshi> {n| Exited ER2 }
  {n|Long @ 802.40 --> - 1.1 }
[11:20] <NihabaAshi> {r| Reverse }
  {r|and Enter Short ER2 @ 802.40 }
[11:21] <NihabaAshi> Exited the
  1 contract and added a few
  more to the Short position.
[11:21] <RussellDaytrade> {g| Long }
  {g|ER2 @ 801.9 } {p|«« paper »»}
[11:22] <NihabaAshi> {n| Covered }
  {n|ER2 Short @ 801.70 --> + 0.7 }
[11:22] <NihabaAshi> HOlding 2
  contracts
[11:23] <RussellDaytrade> {g| Long }
  {g|ER2 @ 801.3 -> Add } {p|«« paper}
  {p|»»}
[11:24] <NihabaAshi> {n| Covered }
  {n|ER2 Short @ 802.00 --> + 0.4 }
[11:25] <RussellDaytrade> {n| }
  {n|Exited 1/2 ER2 Long @ 802.2 }
  {n|--> + 0.9 } {p|«« paper »»}
[11:25] <NihabaAshi> I'm done
  for the trading day...
[11:26] <NihabaAshi> I'm going
  to sit here and document the
  price action of the ECB speech
  @ 1130 by ECB President
  Trichet until I leave at
  1230pm est.
{t|[11:26] * NihabaAshi is now}
{t|known as NihabaAshi_away}`;
const cls={n:'cn',g:'cg',r:'cr',y:'cy',p:'tr',t:'tg'};
$('chat').innerHTML='<div style="margin-top:-8px">'+L.split('\n').map(l=>'<div>'+l.replace(/&/g,'&amp;').replace(/</g,'&lt;').replace(/>/g,'&gt;').replace(/\{(\w)\|([^}]*)\}/g,(m,k,t)=>`<span class="${cls[k]}">${t}</span>`)+'</div>').join('')+'</div>';
$('nicks').innerHTML='@NihabaAshi_ @X +asuni12 +base +Brutus +Chilly +DevilDog +Dmi76 +eminitrade +Fleneer +ItalianSha +jperl +PapaJon +pat255 +RussellDay +wizardofri codehead JavaGuest juniorinzy mi pdays szubaark vvsr79'.split(' ').map(n=>`<div>${n}</div>`).join('');

document.querySelectorAll('[data-ic]').forEach(e=>{e.outerHTML=svg(e.dataset.ic,e.dataset.s)});
document.querySelectorAll('[data-ctl]').forEach(e=>{e.outerHTML=ctl(e.dataset.ctl)});
</script>
</body>
</html>
